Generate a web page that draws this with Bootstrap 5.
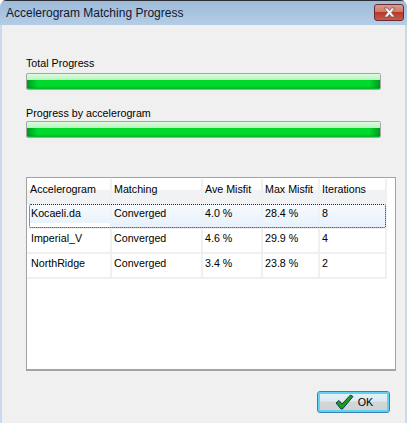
<!DOCTYPE html>
<html lang="en">
  <head>
    <meta charset="UTF-8" />
    <title>Accelerogram Matching Progress</title>
    <link
      href="https://cdn.jsdelivr.net/npm/bootstrap@5.3.0/dist/css/bootstrap.min.css"
      rel="stylesheet"
    />
    <style>
      html,
      body {
        height: 100%;
        background: #fff;
        overflow: hidden;
      }

      .app-window {
        width: 407px;
        height: 423px;
        font-family: 'Liberation Sans', Arial, sans-serif;
        font-size: 10.7px;
        color: #000;
        background: #f0f0f0;
        border-left: 2px solid #c8daec;
        border-right: 2px solid #c8daec;
        border-top: 1px solid #2a2f36;
        border-top-left-radius: 6px;
        border-top-right-radius: 6px;
      }

      .title-bar {
        height: 24px;
        margin: 0 -2px;
        padding: 0 3px 0 6px;
        background: linear-gradient(#9fbbd8, #b4cde6);
        border-top-left-radius: 6px;
        border-top-right-radius: 6px;
        font-size: 12px;
        color: #101830;
      }

      .close-btn {
        width: 30px;
        height: 17px;
        margin-top: -1px;
        border: 1px solid #6a2a35;
        border-radius: 3px;
        background: linear-gradient(#dc9b8d 0, #cf7a6c 45%, #b8392a 50%, #c65a4a 100%);
      }

      .dialog-body {
        padding: 31px 9px 10px 24px;
      }

      .progress-label {
        height: 14px;
        line-height: 14px;
        margin-bottom: 3px;
      }

      .progress-label.tight-label {
        margin-bottom: 1px;
      }

      .progress.glass-track {
        width: 355px;
        height: 17px;
        margin-bottom: 16px;
        border: 1px solid #a3a8a3;
        border-radius: 2px;
        background: #e6e6e6;
      }

      .progress-bar.glass-fill {
        width: 100%;
        background:
          linear-gradient(90deg, rgba(0, 90, 20, 0.5), transparent 3%, transparent 97%, rgba(0, 90, 20, 0.5)) 0 6px / 100% 8px no-repeat,
          linear-gradient(#dcfcdf 0, #b8f5bc 38%, #00d82c 42%, #00d82c 80%, #05b42a 100%);
      }

      .grid-box {
        height: 194px;
        margin-top: 39px;
        padding-top: 1px;
        background: #fff;
        border: 1px solid #a3a3a3;
        border-width: 1px 1px 2px 1px;
      }

      .result-grid {
        width: 360px;
        table-layout: fixed;
        border-collapse: separate;
        border-spacing: 0;
      }

      .result-grid th,
      .result-grid td {
        height: 25px;
        padding: 0 0 4px 2px;
        font-weight: 400;
        vertical-align: middle;
        white-space: nowrap;
        overflow: hidden;
        border-right: 2px solid #f0f0f0;
        border-bottom: 2px solid #f0f0f0;
      }

      .result-grid th {
        padding-bottom: 3px;
        background: linear-gradient(#fff 0, #fff 45%, #f1f2f4 50%, #f1f2f4 100%);
      }

      .result-grid th:first-child {
        padding-left: 3px;
      }

      .result-grid td:first-child {
        padding-left: 4px;
      }

      .result-grid tr.row-focus td {
        background: linear-gradient(#f7fbff, #e7f0fb);
        border-right-color: #eef1f6;
      }

      .result-grid tr.row-focus td:first-child {
        background-clip: content-box;
        padding-left: 0;
        border-left: 2px solid #fff;
        text-indent: 2px;
      }

      .focus-rect {
        left: 2px;
        top: 26px;
        width: 357px;
        height: 24px;
        border: 1px dotted #0f2a55;
        border-radius: 2px;
        pointer-events: none;
      }

      .btn.ok-btn {
        width: 73px;
        height: 22px;
        margin-top: 20px;
        margin-right: 6px;
        padding: 0 0 0 1px;
        font-size: 10.7px;
        color: #000;
        border: 1px solid #3c7fb1;
        border-radius: 3px;
        background: linear-gradient(#e8f3f9 0, #dceaf2 45%, #d4d6d8 50%, #cfd1d3 100%);
        box-shadow: inset 0 0 0 2px #5fd3f0;
      }
    </style>
  </head>

  <body>
    <div class="app-window d-flex flex-column">
      <div class="title-bar d-flex align-items-center justify-content-between">
        <span>Accelerogram Matching Progress</span>
        <div class="close-btn d-flex align-items-center justify-content-center">
          <svg width="15" height="11" viewBox="0 0 15 11">
            <path d="M2 1 H5.5 L7.5 3.5 L9.5 1 H13 L9.5 5.5 L13 10 H9.5 L7.5 7.5 L5.5 10 H2 L5.5 5.5 Z" fill="#f2f2f2" stroke="#6d4a48" stroke-width="0.7" />
          </svg>
        </div>
      </div>

      <div class="dialog-body d-flex flex-column flex-grow-1">
        <div class="progress-label">Total Progress</div>
        <div class="progress glass-track">
          <div class="progress-bar glass-fill"></div>
        </div>
        <div class="progress-label tight-label">Progress by accelerogram</div>
        <div class="progress glass-track mb-0">
          <div class="progress-bar glass-fill"></div>
        </div>

        <div class="grid-box position-relative">
          <table class="result-grid">
            <colgroup>
              <col width="85" />
              <col width="91" />
              <col width="60" />
              <col width="57" />
              <col width="67" />
            </colgroup>
            <thead>
              <tr>
                <th>Accelerogram</th>
                <th>Matching</th>
                <th>Ave Misfit</th>
                <th>Max Misfit</th>
                <th>Iterations</th>
              </tr>
            </thead>
            <tbody>
              <tr class="row-focus">
                <td>Kocaeli.da</td>
                <td>Converged</td>
                <td>4.0 %</td>
                <td>28.4 %</td>
                <td>8</td>
              </tr>
              <tr>
                <td>Imperial_V</td>
                <td>Converged</td>
                <td>4.6 %</td>
                <td>29.9 %</td>
                <td>4</td>
              </tr>
              <tr>
                <td>NorthRidge</td>
                <td>Converged</td>
                <td>3.4 %</td>
                <td>23.8 %</td>
                <td>2</td>
              </tr>
            </tbody>
          </table>
          <div class="focus-rect position-absolute"></div>
        </div>

        <div class="d-flex justify-content-end">
          <button type="button" class="btn ok-btn d-flex align-items-center justify-content-center gap-1">
            <svg width="19" height="16" viewBox="0 0 19 16">
              <path d="M1 9 L4 6.5 L7 10 L15.5 1 L18 2.5 L7.5 15 H6 Z" fill="#1f9a1f" stroke="#0c3a5c" stroke-width="1" stroke-linejoin="round" />
            </svg>
            <span>OK</span>
          </button>
        </div>
      </div>
    </div>

    <script src="https://cdn.jsdelivr.net/npm/bootstrap@5.3.0/dist/js/bootstrap.bundle.min.js"></script>
  </body>
</html>
